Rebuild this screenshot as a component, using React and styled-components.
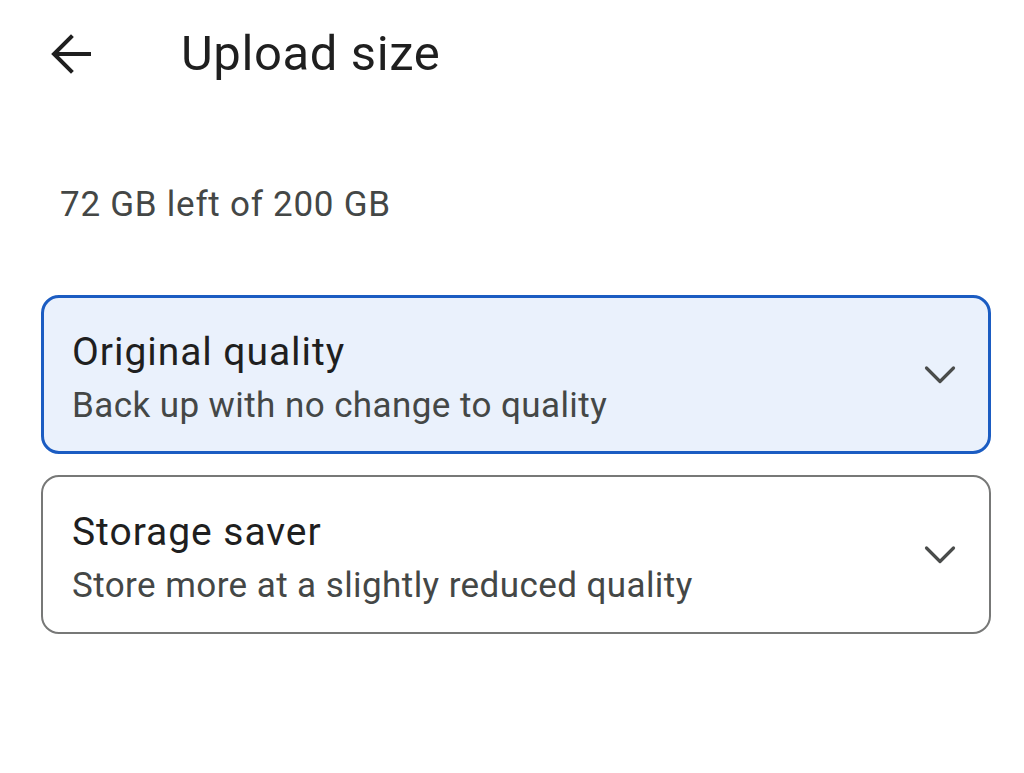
import React from "react";
import styled, { createGlobalStyle } from "styled-components";

const Global = createGlobalStyle`
  html, body { margin: 0; padding: 0; background: #ffffff; }
  body { font-family: Roboto, "Noto Sans", sans-serif; color: #1f1f1f; }
`;

const Page = styled.div`
  width: 1024px;
  height: 773px;
  display: flex;
  flex-direction: column;
  background: #fff;
`;

const Header = styled.header`
  display: flex;
  align-items: center;
  height: 107px;
  padding-left: 47px;
`;

const BackButton = styled.button`
  width: 48px;
  height: 48px;
  display: flex;
  align-items: center;
  justify-content: center;
  border: none;
  background: none;
  padding: 0;
  margin-right: 86px;
  color: #1f1f1f;
`;

const Title = styled.h1`
  margin: 0;
  font-size: 49px;
  line-height: 56px;
  font-weight: 400;
  letter-spacing: 0.6px;
  color: #1f1f1f;
`;

const Quota = styled.p`
  margin: 78px 0 0 60px;
  font-size: 35px;
  line-height: 40px;
  letter-spacing: 0.75px;
  color: #444746;
`;

const Options = styled.div`
  display: flex;
  flex-direction: column;
  gap: 21px;
  margin: 70px 33px 0 41px;
`;

const Card = styled.div`
  display: flex;
  align-items: center;
  box-sizing: border-box;
  height: 159px;
  padding: 0 ${(p) => (p.$selected ? "30px" : "31px")} 0 ${(p) => (p.$selected ? "28px" : "29px")};
  border: ${(p) => (p.$selected ? "3px solid #1b5cc2" : "2px solid #777877")};
  border-radius: 18px;
  background: ${(p) => (p.$selected ? "#eaf1fc" : "#ffffff")};
`;

const Texts = styled.div`
  flex: 1;
  display: flex;
  flex-direction: column;
  padding-top: 9px;
`;

const OptionTitle = styled.div`
  font-size: 39px;
  line-height: 40px;
  letter-spacing: 0.95px;
  color: #1f1f1f;
`;

const OptionSub = styled.div`
  margin-top: 14px;
  font-size: 35px;
  line-height: 40px;
  letter-spacing: 0.42px;
  color: #444746;
`;

const Chevron = () => (
  <svg width="36" height="36" viewBox="0 0 36 36" fill="none">
    <path d="M4.5 11 L18 24.5 L31.5 11" stroke="#4a4c4b" strokeWidth="3.2" strokeLinecap="round" strokeLinejoin="round" />
  </svg>
);

const BackArrow = () => (
  <svg width="44" height="44" viewBox="0 0 44 44" fill="none">
    <path d="M40 22 H6 M22 5 L5 22 L22 39" stroke="#1f1f1f" strokeWidth="4" strokeLinecap="square" strokeLinejoin="miter" />
  </svg>
);

const options = [
  { title: "Original quality", sub: "Back up with no change to quality", selected: true },
  { title: "Storage saver", sub: "Store more at a slightly reduced quality", selected: false },
];

export default function App() {
  return (
    <Page>
      <Global />
      <Header>
        <BackButton aria-label="Back">
          <BackArrow />
        </BackButton>
        <Title>Upload size</Title>
      </Header>
      <Quota>72 GB left of 200 GB</Quota>
      <Options>
        {options.map((o) => (
          <Card key={o.title} $selected={o.selected}>
            <Texts>
              <OptionTitle>{o.title}</OptionTitle>
              <OptionSub>{o.sub}</OptionSub>
            </Texts>
            <Chevron />
          </Card>
        ))}
      </Options>
    </Page>
  );
}
